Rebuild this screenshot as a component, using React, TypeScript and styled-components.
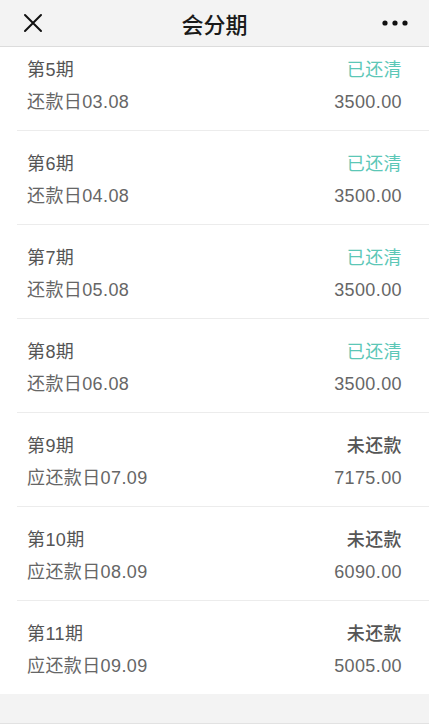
import React from "react";
import styled, { createGlobalStyle } from "styled-components";

const Global = createGlobalStyle`
  html, body { margin: 0; padding: 0; }
  body {
    background: #f3f3f3;
    font-family: "Liberation Sans", "Noto Sans CJK SC", sans-serif;
  }
`;

const Page = styled.div`
  width: 429px;
  height: 724px;
  overflow: hidden;
  padding-top: 37px;
  box-sizing: border-box;
  display: flex;
  flex-direction: column;
`;

const Header = styled.header`
  position: fixed;
  top: 0;
  left: 0;
  width: 429px;
  height: 46px;
  background: #f3f3f3;
  border-bottom: 1px solid #dcdcdc;
  display: grid;
  grid-template-columns: 60px 1fr 60px;
  align-items: center;
  z-index: 2;
`;

const IconBtn = styled.div<{ $align: "start" | "end" }>`
  display: flex;
  justify-content: ${(p) => (p.$align === "start" ? "flex-start" : "flex-end")};
  padding: ${(p) => (p.$align === "start" ? "0 0 0 23px" : "0 21px 0 0")};
  align-items: center;
`;

const Title = styled.h1`
  margin: 0;
  text-align: center;
  font-family: "Noto Sans CJK SC", sans-serif;
  font-size: 22px;
  font-weight: 500;
  color: #1a1a1a;
  line-height: 46px;
`;

const List = styled.ul`
  list-style: none;
  margin: 0;
  padding: 0;
  background: #fff;
`;

const Row = styled.li`
  height: 94px;
  box-sizing: border-box;
  margin-left: 17px;
  padding: 17px 27px 0 10px;
  display: flex;
  justify-content: space-between;
  border-bottom: 1px solid #ececec;
  &:last-child {
    border-bottom: none;
    height: 93px;
  }
`;

const Col = styled.div<{ $right?: boolean }>`
  display: flex;
  flex-direction: column;
  align-items: ${(p) => (p.$right ? "flex-end" : "flex-start")};
`;

const Line = styled.span<{ $color: string; $weight?: number }>`
  font-size: 18px;
  line-height: 32px;
  letter-spacing: 0.4px;
  color: ${(p) => p.$color};
  font-weight: ${(p) => p.$weight ?? 400};
`;

const Footer = styled.div`
  flex: 1;
  border-bottom: 1px solid #e2e2e2;
`;

type Item = { n: number; date: string; amount: string; paid: boolean };

const items: Item[] = [
  { n: 5, date: "03.08", amount: "3500.00", paid: true },
  { n: 6, date: "04.08", amount: "3500.00", paid: true },
  { n: 7, date: "05.08", amount: "3500.00", paid: true },
  { n: 8, date: "06.08", amount: "3500.00", paid: true },
  { n: 9, date: "07.09", amount: "7175.00", paid: false },
  { n: 10, date: "08.09", amount: "6090.00", paid: false },
  { n: 11, date: "09.09", amount: "5005.00", paid: false },
];

export default function App() {
  return (
    <>
      <Global />
      <Header>
        <IconBtn $align="start">
          <svg width="20" height="20" viewBox="0 0 20 20">
            <path d="M2 2 L18 18 M18 2 L2 18" stroke="#111" strokeWidth="2" strokeLinecap="round" />
          </svg>
        </IconBtn>
        <Title>会分期</Title>
        <IconBtn $align="end">
          <svg width="26" height="6" viewBox="0 0 26 6">
            <circle cx="3" cy="3" r="2.6" fill="#111" />
            <circle cx="13" cy="3" r="2.6" fill="#111" />
            <circle cx="23" cy="3" r="2.6" fill="#111" />
          </svg>
        </IconBtn>
      </Header>
      <Page>
        <List>
          {items.map((it) => (
            <Row key={it.n}>
              <Col>
                <Line $color="#555">第{it.n}期</Line>
                <Line $color="#666">{it.paid ? "还款日" : "应还款日"}{it.date}</Line>
              </Col>
              <Col $right>
                {it.paid ? (
                  <Line $color="#5cc7b7">已还清</Line>
                ) : (
                  <Line $color="#555" $weight={500}>未还款</Line>
                )}
                <Line $color="#666">{it.amount}</Line>
              </Col>
            </Row>
          ))}
        </List>
        <Footer />
      </Page>
    </>
  );
}
